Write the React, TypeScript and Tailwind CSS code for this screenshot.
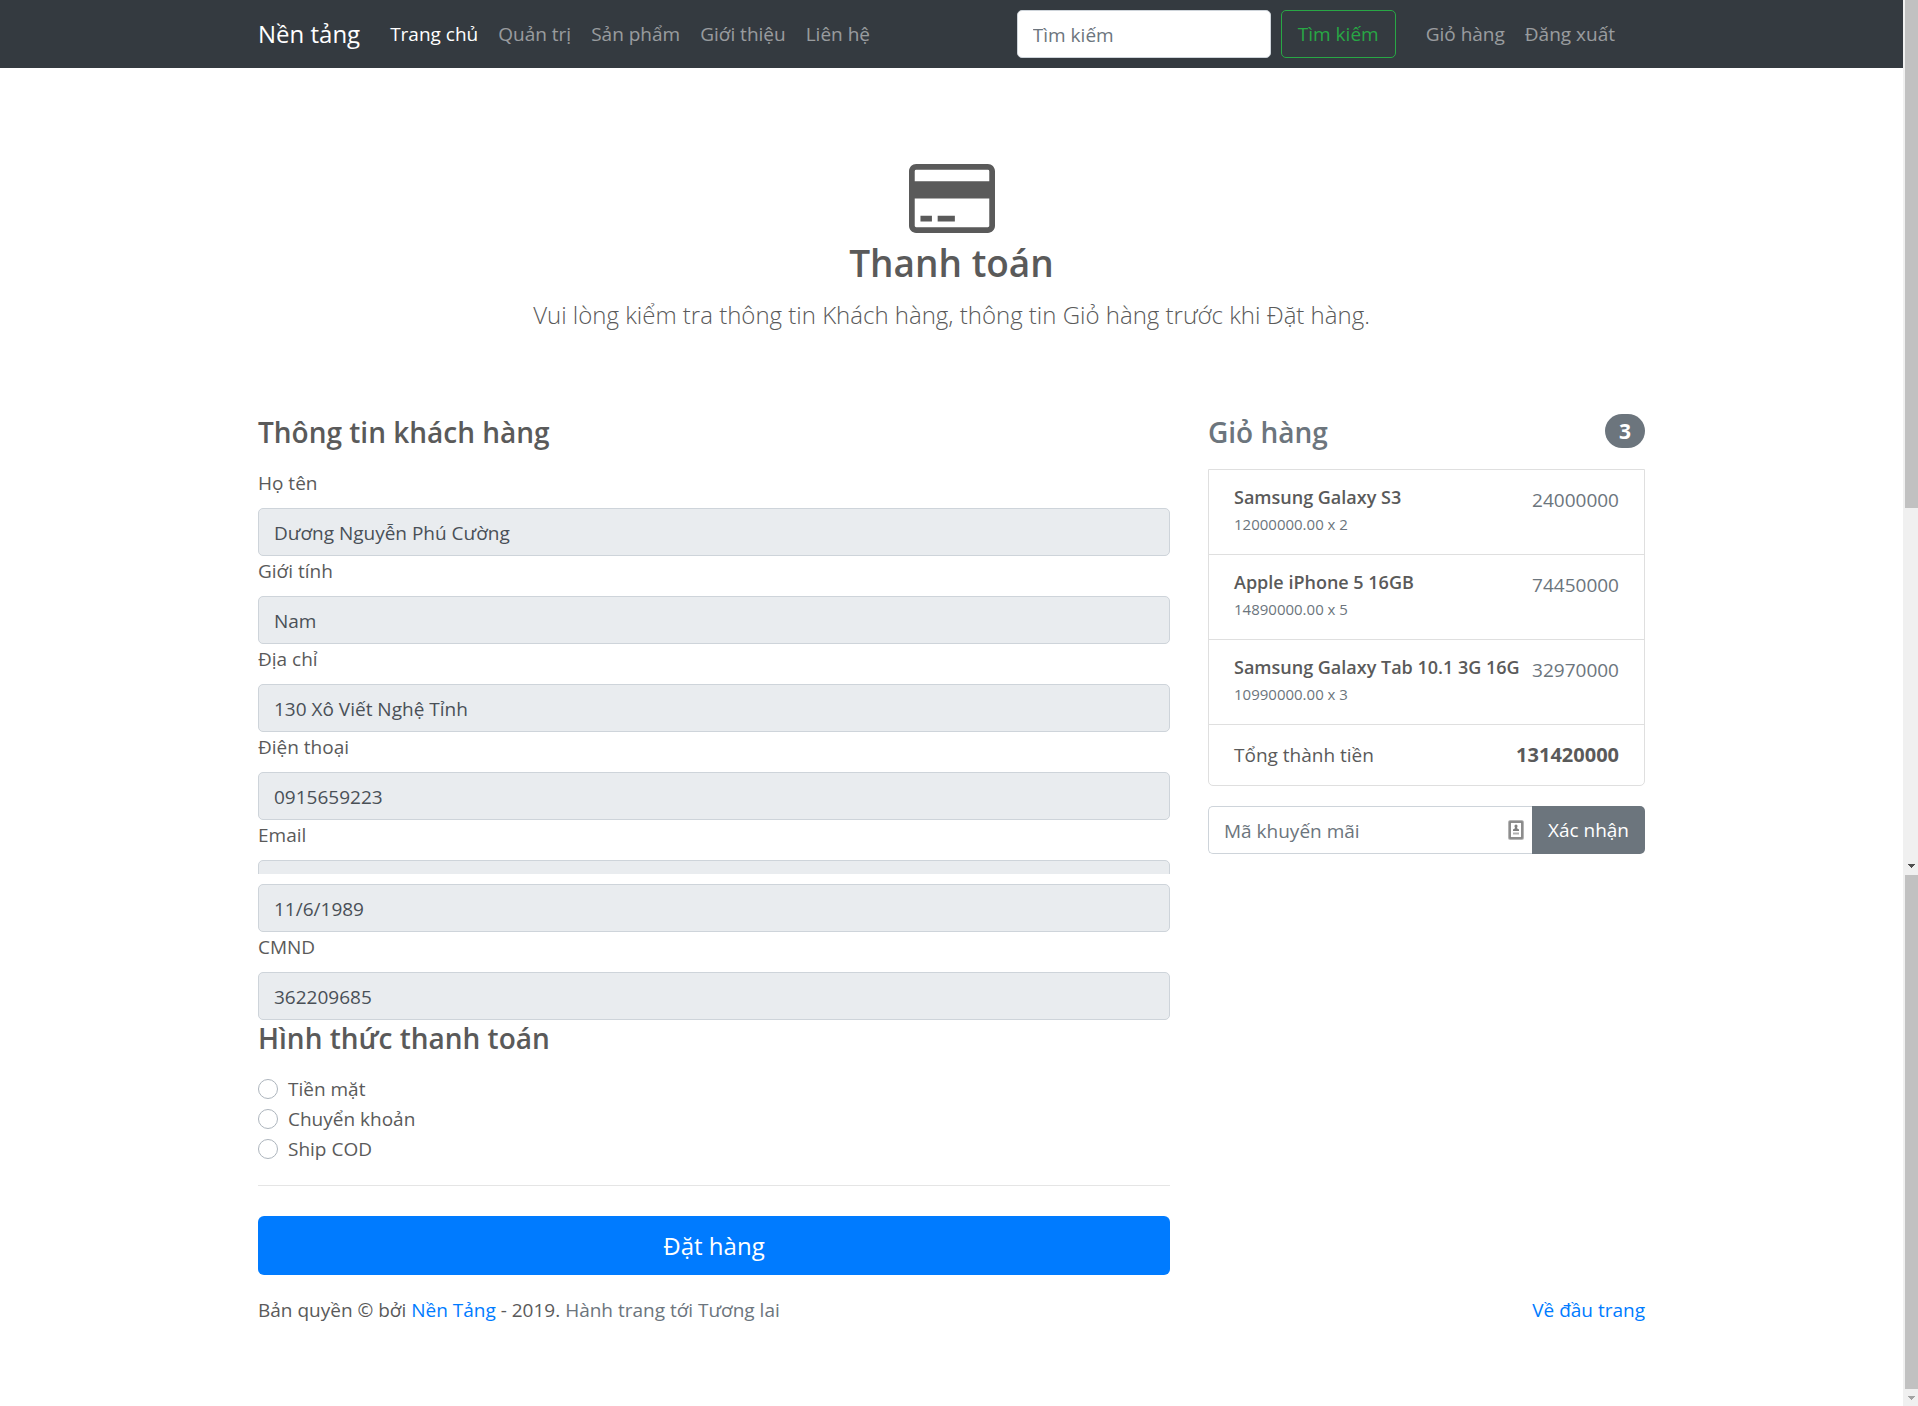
import React from "react";

const navLinks = ["Trang chủ", "Quản trị", "Sản phẩm", "Giới thiệu", "Liên hệ"];

const cartItems = [
  { name: "Samsung Galaxy S3", detail: "12000000.00 x 2", total: "24000000" },
  { name: "Apple iPhone 5 16GB", detail: "14890000.00 x 5", total: "74450000" },
  { name: "Samsung Galaxy Tab 10.1 3G 16G", detail: "10990000.00 x 3", total: "32970000" },
];

const customerFields = [
  { id: "name", label: "Họ tên", value: "Dương Nguyễn Phú Cường" },
  { id: "gender", label: "Giới tính", value: "Nam" },
  { id: "address", label: "Địa chỉ", value: "130 Xô Viết Nghệ Tỉnh" },
  { id: "phone", label: "Điện thoại", value: "0915659223" },
];

const paymentMethods = ["Tiền mặt", "Chuyển khoản", "Ship COD"];

const readonlyInput =
  "block h-12 w-full rounded-[5px] border border-[#ced4da] bg-[#e9ecef] px-[15px] pt-0.5 text-[#495057]";

function Field({ id, label, value }: { id: string; label: string; value: string }) {
  return (
    <div>
      <label htmlFor={id} className="mb-2.5 block">
        {label}
      </label>
      <input id={id} readOnly value={value} className={readonlyInput} />
    </div>
  );
}

function CardIcon() {
  return (
    <svg viewBox="0 0 15 12" className="mx-auto h-[69px] w-[86px]" fill="currentColor" aria-hidden="true">
      <path
        fillRule="evenodd"
        d="M1.25 0h12.5C14.44 0 15 .56 15 1.25v9.5c0 .69-.56 1.25-1.25 1.25H1.25C.56 12 0 11.44 0 10.75v-9.5C0 .56.56 0 1.25 0zM1.25 1a.25.25 0 0 0-.25.25V3h13V1.25a.25.25 0 0 0-.25-.25zM1 6v4.75c0 .14.11.25.25.25h12.5c.14 0 .25-.11.25-.25V6z"
      />
      <path d="M2 9h2v1H2zM5 9h3v1H5z" />
    </svg>
  );
}

function AutofillIcon() {
  return (
    <svg viewBox="0 0 16 20" className="h-5 w-4 shrink-0" fill="none" aria-hidden="true">
      <rect x="1.5" y="1.5" width="13" height="17" rx="1" stroke="#b5b5b5" strokeWidth="3" />
      <rect x="2" y="2" width="12" height="16" stroke="#808080" strokeWidth="1.500" />
      <path d="M8 4.500c1 0 1.500.8 1.500 1.700S9 7.600 9 8.200l2 1.300v1.500H5V9.500l2-1.300C7 7.600 6.500 7.100 6.500 6.200S7 4.500 8 4.500z" fill="#808080" />
      <path d="M5 13.500h6" stroke="#b0b0b0" strokeWidth="2" />
    </svg>
  );
}

function Arrow({ className }: { className: string }) {
  return (
    <svg viewBox="0 0 7 4" className={className} fill="currentColor" shapeRendering="crispEdges" aria-hidden="true">
      <path d="M0 0h7v1H0zM1 1h5v1H1zM2 2h3v1H2zM3 3h1v1H3z" />
    </svg>
  );
}

function ScrollRail() {
  return (
    <div className="flex w-[15px] shrink-0 flex-col bg-[#f0f0f0] pl-0.5" aria-hidden="true">
      <div className="grow-[508] basis-0 bg-[#c1c1c1]" />
      <div className="flex grow-[367] basis-0 items-end justify-center">
        <Arrow className="mb-[7px] h-1 w-[7px] text-[#505050]" />
      </div>
      <div className="grow-[514] basis-0 bg-[#c1c1c1]" />
      <div className="flex grow-[17] basis-0 items-center justify-center">
        <Arrow className="h-1 w-[7px] text-[#a3a3a3]" />
      </div>
    </div>
  );
}

export default function App() {
  return (
    <div className="flex min-h-screen bg-white font-['Open_Sans','Noto_Sans',sans-serif] text-[19px] leading-[30px] text-[#5a5a5a]">
      <div className="min-w-0 grow">
        <nav className="bg-[#343a40] text-white/50">
          <div className="mx-auto flex h-[68px] max-w-[1425px] items-center px-[19px]">
            <a href="#" className="mr-5 text-2xl text-white">
              Nền tảng
            </a>
            <ul className="flex">
              {navLinks.map((link, i) => (
                <li key={link}>
                  <a href="#" className={i === 0 ? "block px-2.5 text-white" : "block px-2.5"}>
                    {link}
                  </a>
                </li>
              ))}
            </ul>
            <form className="ml-auto flex gap-2.5" onSubmit={(e) => e.preventDefault()}>
              <input
                aria-label="Tìm kiếm"
                placeholder="Tìm kiếm"
                className="h-12 w-[254px] rounded-[5px] border border-[#ced4da] bg-white px-[15px] pt-0.5 text-[#495057] placeholder:text-[#6c757d]"
              />
              <button className="h-12 rounded-[5px] border border-[#28a745] px-4 text-[#28a745]">Tìm kiếm</button>
            </form>
            <ul className="flex px-5">
              {["Giỏ hàng", "Đăng xuất"].map((link) => (
                <li key={link}>
                  <a href="#" className="block px-2.5">
                    {link}
                  </a>
                </li>
              ))}
            </ul>
          </div>
        </nav>

        <main className="mx-auto max-w-[1425px] px-[19px]">
          <header className="pt-24 pb-20 text-center">
            <CardIcon />
            <h1 className="mt-1.5 mb-[9px] text-[37px] leading-[48px] font-semibold">Thanh toán</h1>
            <p className="text-2xl leading-[38px] font-light">
              Vui lòng kiểm tra thông tin Khách hàng, thông tin Giỏ hàng trước khi Đặt hàng.
            </p>
          </header>

          <div className="-mx-[19px] flex items-start">
            <form className="w-2/3 px-[19px]" onSubmit={(e) => e.preventDefault()}>
              <h2 className="mb-[18px] text-[28px] leading-9 font-semibold">Thông tin khách hàng</h2>
              {customerFields.map((f) => (
                <Field key={f.id} {...f} />
              ))}
              <div className="mb-2.5 h-[54px] overflow-hidden">
                <Field id="email" label="Email" value="" />
              </div>
              <input aria-label="Ngày sinh" readOnly value="11/6/1989" className={readonlyInput} />
              <Field id="cmnd" label="CMND" value="362209685" />

              <fieldset>
                <legend className="mb-[18px] text-[28px] leading-9 font-semibold">Hình thức thanh toán</legend>
                {paymentMethods.map((m) => (
                  <label key={m} className="flex items-center gap-2.5">
                    <input
                      type="radio"
                      name="payment"
                      className="size-5 appearance-none rounded-full border border-[#adb5bd] bg-white checked:border-[6px] checked:border-[#007bff]"
                    />
                    {m}
                  </label>
                ))}
              </fieldset>
              <hr className="mt-[21px] mb-[30px] border-black/10" />
              <button className="h-[59px] w-full rounded-md bg-[#007bff] text-2xl text-white">Đặt hàng</button>
            </form>

            <aside className="w-1/3 px-[19px]">
              <h2 className="mb-[19px] flex items-start justify-between text-[28px] leading-9 font-semibold text-[#6c757d]">
                Giỏ hàng
                <span className="rounded-full bg-[#6c757d] px-3.5 text-[21px] leading-[34px] font-bold text-white">3</span>
              </h2>
              <ul className="mb-5 divide-y divide-[#dfdfdf] rounded-b-[5px] border border-[#dfdfdf]">
                {cartItems.map((item) => (
                  <li key={item.name} className="flex justify-between px-[25px] py-[15px]">
                    <div>
                      <h3 className="text-[18px] leading-6 font-semibold whitespace-nowrap">{item.name}</h3>
                      <small className="block text-[15px] leading-[30px] text-[#6c757d]">{item.detail}</small>
                    </div>
                    <span className="text-[#6c757d]">{item.total}</span>
                  </li>
                ))}
                <li className="flex justify-between px-[25px] py-[15px]">
                  <span>Tổng thành tiền</span>
                  <strong className="text-[20px] font-bold">131420000</strong>
                </li>
              </ul>
              <form className="flex h-12" onSubmit={(e) => e.preventDefault()}>
                <div className="flex min-w-0 grow items-center rounded-l-[5px] border border-r-0 border-[#ced4da] pr-2">
                  <input
                    aria-label="Mã khuyến mãi"
                    placeholder="Mã khuyến mãi"
                    className="h-full min-w-0 grow px-[15px] pt-0.5 text-[#495057] placeholder:text-[#6c757d]"
                  />
                  <AutofillIcon />
                </div>
                <button className="shrink-0 rounded-r-[5px] bg-[#6c757d] px-4 text-white">Xác nhận</button>
              </form>
            </aside>
          </div>

          <footer className="flex justify-between pt-5">
            <p>
              Bản quyền © bởi{" "}
              <a href="#" className="text-[#007bff]">
                Nền Tảng
              </a>{" "}
              - 2019. <span className="text-[#6c757d]">Hành trang tới Tương lai</span>
            </p>
            <a href="#" className="text-[#007bff]">
              Về đầu trang
            </a>
          </footer>
        </main>
      </div>
      <ScrollRail />
    </div>
  );
}
